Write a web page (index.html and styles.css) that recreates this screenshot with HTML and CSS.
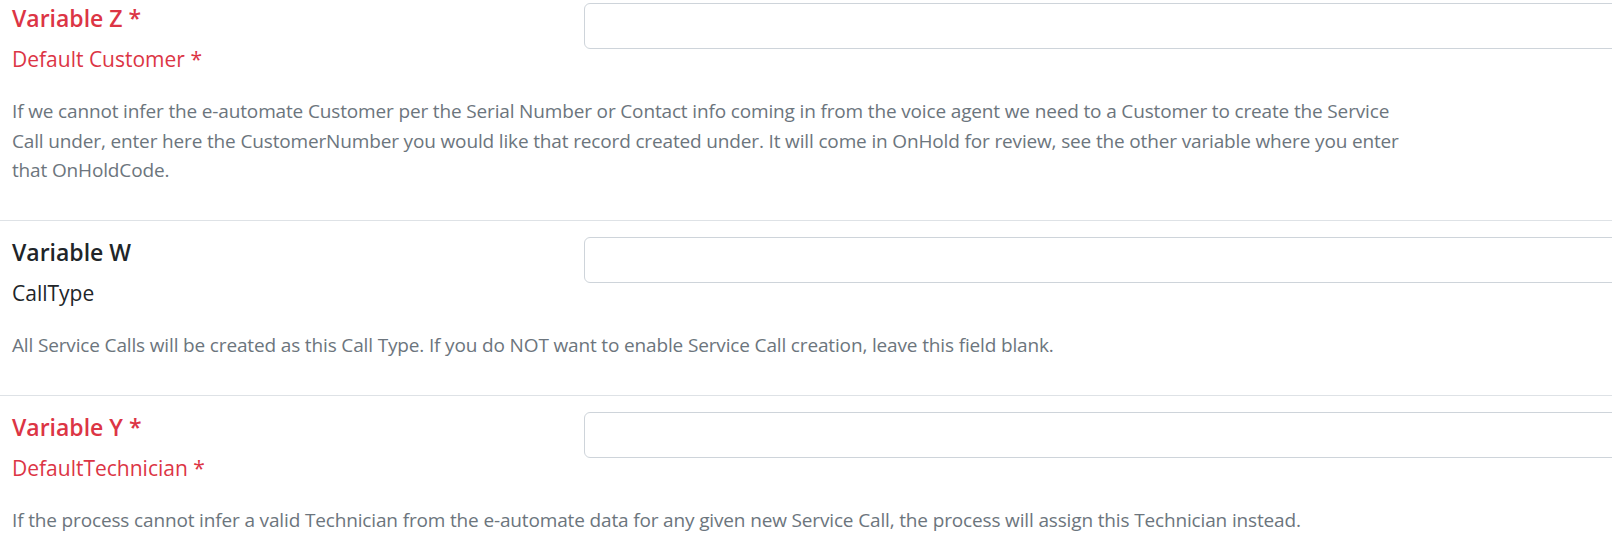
FILE: index.html
```html
<!DOCTYPE html>
<html lang="en">
<head>
<meta charset="utf-8">
<title>Variables</title>
<link rel="stylesheet" href="styles.css">
</head>
<body>
<main class="vars">
  <section class="var">
    <div class="var-head">
      <div class="var-names">
        <h5 class="var-title required">Variable Z *</h5>
        <label class="var-label required" for="v-z">Default Customer *</label>
      </div>
      <input class="var-input" id="v-z" type="text">
    </div>
    <p class="var-desc">If we cannot infer the e-automate Customer per the Serial Number or Contact info coming in from the voice agent we need to a Customer to create the Service Call under, enter here the CustomerNumber you would like that record created under. It will come in OnHold for review, see the other variable where you enter that OnHoldCode.</p>
  </section>
  <section class="var">
    <div class="var-head">
      <div class="var-names">
        <h5 class="var-title">Variable W</h5>
        <label class="var-label" for="v-w">CallType</label>
      </div>
      <input class="var-input" id="v-w" type="text">
    </div>
    <p class="var-desc">All Service Calls will be created as this Call Type. If you do NOT want to enable Service Call creation, leave this field blank.</p>
  </section>
  <section class="var">
    <div class="var-head">
      <div class="var-names">
        <h5 class="var-title required">Variable Y *</h5>
        <label class="var-label required" for="v-y">DefaultTechnician *</label>
      </div>
      <input class="var-input" id="v-y" type="text">
    </div>
    <p class="var-desc">If the process cannot infer a valid Technician from the e-automate data for any given new Service Call, the process will assign this Technician instead.</p>
  </section>
</main>
</body>
</html>
```

FILE: styles.css
```css
html, body {
  margin: 0;
  background: #fff;
  overflow: hidden;
}

body {
  font-family: "Open Sans", "Noto Sans", sans-serif;
  color: #212529;
}

.vars {
  width: 1700px;
}

.var {
  border-top: 1px solid #dee2e6;
  padding: 16px 0 34.5px 12px;
}

.var:first-child {
  border-top: none;
  padding-top: 3px;
}

.var-head {
  display: grid;
  grid-template-columns: 572px 1fr;
  align-items: start;
}

.var-title {
  margin: 0;
  font-size: 23px;
  font-weight: 600;
  line-height: 30px;
}

.var-label {
  display: block;
  margin-top: 11px;
  font-size: 21px;
  line-height: 30px;
}

.var-input {
  display: block;
  box-sizing: border-box;
  width: 100%;
  height: 46px;
  margin: 0;
  padding: 0 12px;
  border: 1px solid #ced4da;
  border-radius: 6px;
  background: #fff;
}

.var-desc {
  margin: 23px 0 0;
  max-width: 1400px;
  font-size: 19px;
  letter-spacing: -0.15px;
  line-height: 29.5px;
  color: #6c757d;
}

.required {
  color: #dc3545;
}
```
